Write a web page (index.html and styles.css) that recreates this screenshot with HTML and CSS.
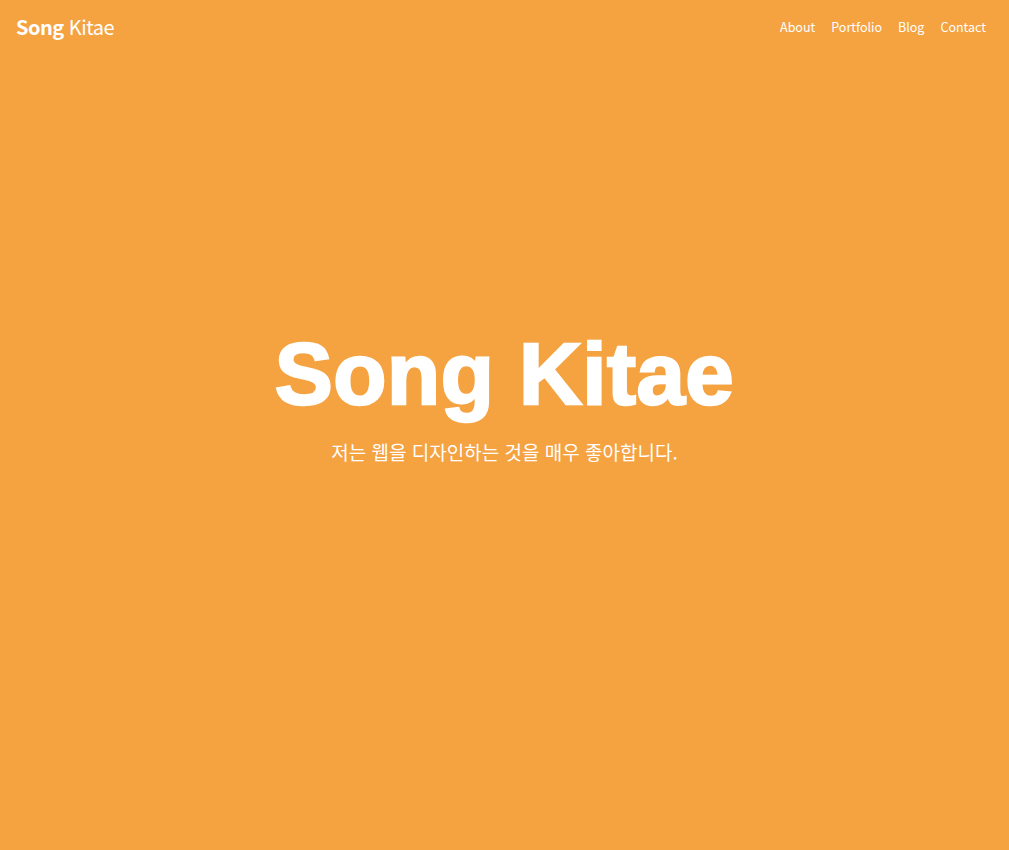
FILE: index.html
```html
<!DOCTYPE html>
<html lang="ko">
<head>
<meta charset="utf-8">
<title>Song Kitae</title>
<link rel="stylesheet" href="styles.css">
</head>
<body>
<header class="header">
  <a class="logo" href="#"><b>Song</b> Kitae</a>
  <nav class="nav">
    <a href="#">About</a>
    <a href="#">Portfolio</a>
    <a href="#">Blog</a>
    <a href="#">Contact</a>
  </nav>
</header>
<main class="hero">
  <h1 class="title">Song Kitae</h1>
  <p class="subtitle">저는 웹을 디자인하는 것을 매우 좋아합니다.</p>
</main>
</body>
</html>
```
FILE: styles.css
```css
html, body {
  margin: 0;
  padding: 0;
  height: 100%;
}
body {
  background: #f5a241;
  color: #fff;
  font-family: "Noto Sans CJK KR", "Noto Sans", sans-serif;
  display: flex;
  flex-direction: column;
}
a { color: #fff; text-decoration: none; }
.header {
  display: flex;
  justify-content: space-between;
  align-items: center;
  height: 52px;
  padding: 0 23px 0 16px;
}
.logo {
  font-size: 20px;
  font-weight: 400;
  letter-spacing: -0.5px;
}
.logo b { font-weight: 700; }
.nav {
  display: flex;
  gap: 16px;
  font-size: 12.5px;
}
.hero {
  flex: 1;
  display: flex;
  flex-direction: column;
  align-items: center;
  justify-content: center;
  padding-bottom: 108px;
}
.title {
  margin: 0;
  font-family: "Liberation Sans", Arial, sans-serif;
  font-weight: 900;
  font-size: 87px;
  line-height: 1;
  -webkit-text-stroke: 2.5px #fff;
  letter-spacing: 0.5px;
}
.subtitle {
  margin: 21px 0 0;
  font-size: 19px;
}
```
